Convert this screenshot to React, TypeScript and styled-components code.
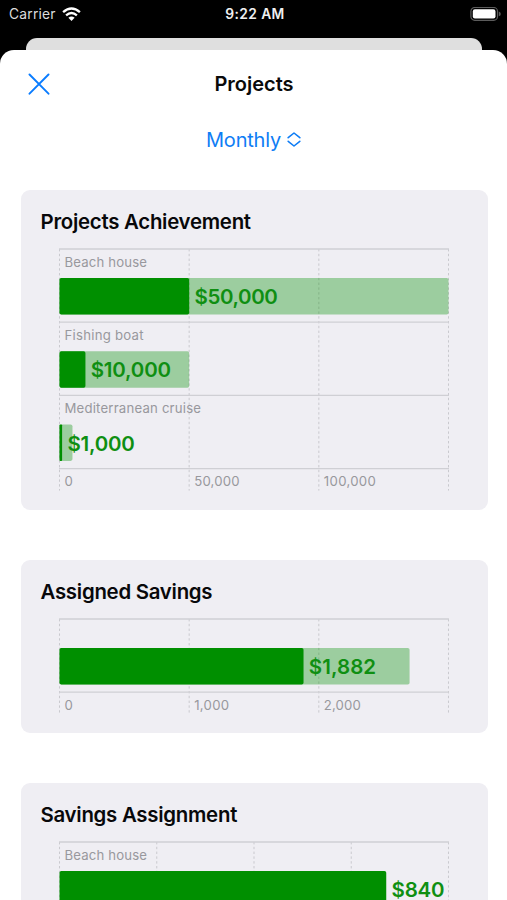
import React from "react";
import styled, { createGlobalStyle } from "styled-components";

const GlobalStyle = createGlobalStyle`
  * { box-sizing: border-box; }
  html, body { margin: 0; background: #000; }
  body { font-family: Inter, "Liberation Sans", sans-serif; overflow: hidden; }
`;

const Screen = styled.div`
  display: flex;
  flex-direction: column;
  width: 507px;
  height: 900px;
  background: #000;
  overflow: hidden;
`;

const StatusBar = styled.header`
  flex: none;
  display: grid;
  grid-template-columns: 1fr auto 1fr;
  align-items: center;
  height: 38px;
  padding: 0 6px 10px 9px;
  color: #f0f0f0;
  font-size: 13.8px;
  line-height: 20px;
`;

const Carrier = styled.div`
  display: flex;
  align-items: center;
  gap: 6px;
  color: #dcdcdc;
  letter-spacing: 0.22px;
`;

const Clock = styled.div`
  font-weight: 600;
  letter-spacing: 0.4px;
`;

const Battery = styled.div`
  display: flex;
  justify-content: flex-end;
`;

const BackSheet = styled.div`
  flex: none;
  height: 12px;
  margin: 0 25px 0 25.5px;
  border-radius: 11px 11px 0 0;
  background: #dfdfdf;
`;

const Sheet = styled.main`
  flex: 1;
  min-height: 0;
  border-radius: 14px 14px 0 0;
  background: #fff;
  overflow: hidden;
`;

const NavBar = styled.div`
  display: grid;
  grid-template-columns: 80px 1fr 80px;
  align-items: center;
  height: 68px;
`;

const CloseButton = styled.button`
  display: flex;
  width: 22px;
  height: 22px;
  margin-left: 28px;
  padding: 0;
  border: 0;
  background: none;
`;

const NavTitle = styled.h1`
  margin: 0;
  padding-left: 1px;
  font-size: 20px;
  font-weight: 600;
  letter-spacing: 0;
  text-align: center;
  color: #0a0a0a;
`;

const PeriodButton = styled.button`
  display: flex;
  align-items: center;
  justify-content: center;
  gap: 6px;
  width: 100%;
  height: 44px;
  padding: 0;
  border: 0;
  background: none;
  color: #0f7df5;
  font: 400 20px Inter, sans-serif;
  letter-spacing: -0.2px;
`;

const Cards = styled.div`
  display: flex;
  flex-direction: column;
  gap: 49.9px;
  padding: 28px 19.5px 0 20.5px;
`;

const Card = styled.section`
  padding-bottom: 18.4px;
  border-radius: 9px;
  background: #efeef3;
`;

const CardTitle = styled.h2`
  margin: 0;
  padding: 18px 0 0 20px;
  height: 58px;
  font-size: 20.4px;
  line-height: 28px;
  font-weight: 600;
  letter-spacing: -0.26px;
  color: #08080a;
  white-space: nowrap;
`;

const Plot = styled.svg`
  display: block;
  margin-left: 37.5px;
`;

const Caption = styled.text`
  font-size: 13.2px;
  fill: #98989d;
`;

const Amount = styled.text`
  font-size: 20.5px;
  font-weight: 600;
  fill: #0f8f12;
`;

const ROW = 73.2;
const WIDTH = 389;

type Row = { name?: string; value: number; goal?: number; label: string; labelWidth: number; nameWidth?: number };
type Tick = { text: string; width: number };
type ChartData = { title: string; max: number; divisions: number; ticks: Tick[]; rows: Row[] };

const charts: ChartData[] = [
  {
    title: "Projects Achievement",
    max: 150000,
    divisions: 3,
    ticks: [{ text: "0", width: 8.5 }, { text: "50,000", width: 45.5 }, { text: "100,000", width: 52 }],
    rows: [
      { name: "Beach house", nameWidth: 82.5, value: 50000, goal: 150000, label: "$50,000", labelWidth: 83.3 },
      { name: "Fishing boat", nameWidth: 79, value: 10000, goal: 50000, label: "$10,000", labelWidth: 80.3 },
      { name: "Mediterranean cruise", nameWidth: 136.5, value: 1000, goal: 5000, label: "$1,000", labelWidth: 67.3 },
    ],
  },
  {
    title: "Assigned Savings",
    max: 3000,
    divisions: 3,
    ticks: [{ text: "0", width: 8.5 }, { text: "1,000", width: 35 }, { text: "2,000", width: 37 }],
    rows: [{ value: 1882, goal: 2700, label: "$1,882", labelWidth: 67.3 }],
  },
  {
    title: "Savings Assignment",
    max: 1000,
    divisions: 4,
    ticks: [],
    rows: [{ name: "Beach house", nameWidth: 82.5, value: 840, label: "$840", labelWidth: 53 }],
  },
];

function BarChart({ data }: { data: ChartData }) {
  const bottom = 1 + data.rows.length * ROW;
  const step = WIDTH / data.divisions;
  const scale = WIDTH / data.max;
  return (
    <Plot width={400} height={bottom + 23} viewBox={`-0.5 0 400 ${bottom + 23}`}>
      {Array.from({ length: data.divisions + 1 }, (_, i) => (
        <line key={i} x1={1 + i * step} x2={1 + i * step} y1={1} y2={bottom + 22} stroke="#c9c9ce" strokeDasharray="2.4 2.4" />
      ))}
      {Array.from({ length: data.rows.length + 1 }, (_, i) => (
        <line key={i} x1={0.5} x2={WIDTH + 1.5} y1={1 + i * ROW} y2={1 + i * ROW} stroke="#cfcfd4" strokeWidth={1.3} />
      ))}
      {data.rows.map((row, i) => {
        const top = 1 + i * ROW;
        const length = row.value * scale;
        return (
          <g key={i}>
            {row.name && (
              <Caption x={6} y={top + 18} textLength={row.nameWidth}>{row.name}</Caption>
            )}
            {row.goal && (
              <rect x={1} y={top + 29} width={row.goal * scale} height={36.5} rx={1.8} fill="#008f00" fillOpacity={0.345} />
            )}
            <rect x={1} y={top + 29} width={length} height={36.5} rx={Math.min(1.8, length / 3)} fill="#008f00" />
            <Amount x={length + 6.3} y={top + 55.2} textLength={row.labelWidth}>{row.label}</Amount>
          </g>
        );
      })}
      {data.ticks.map((tick, i) => (
        <Caption key={i} x={6 + i * step} y={bottom + 17.8} textLength={tick.width}>{tick.text}</Caption>
      ))}
    </Plot>
  );
}

export default function App() {
  return (
    <Screen>
      <GlobalStyle />
      <StatusBar>
        <Carrier>
          Carrier
          <svg width="19" height="15" viewBox="0 0 19 15" fill="none" stroke="#fff" strokeWidth="2.4">
            <path d="M1.1 5.2Q9.5 -2 17.9 5.2" />
            <path d="M4.1 8.3Q9.5 3.8 14.9 8.3" />
            <path d="M6.4 10.8Q9.5 8.2 12.6 10.8L9.5 13.9Z" fill="#fff" stroke="none" />
          </svg>
        </Carrier>
        <Clock>9:22 AM</Clock>
        <Battery>
          <svg width="31" height="15" viewBox="0 0 31 15">
            <rect x="0.9" y="0.5" width="26.6" height="12.8" rx="3.8" fill="none" stroke="#5c5c5c" strokeWidth="1.2" />
            <rect x="2.8" y="2.3" width="22.7" height="9.2" rx="2.1" fill="#fff" />
            <path d="M28.8 4.6Q30.8 5.2 30.8 6.9T28.8 9.2Z" fill="#5c5c5c" />
          </svg>
        </Battery>
      </StatusBar>
      <BackSheet />
      <Sheet>
        <NavBar>
          <CloseButton aria-label="Close">
            <svg width="22" height="22" viewBox="0 0 22 22" stroke="#0a7cff" strokeWidth="1.9" strokeLinecap="round">
              <path d="M1.5 1.5L20.5 20.7M20.5 1.5L1.5 20.7" />
            </svg>
          </CloseButton>
          <NavTitle>Projects</NavTitle>
        </NavBar>
        <PeriodButton>
          Monthly
          <svg width="14" height="16" viewBox="0 0 14 16" fill="none" stroke="currentColor" strokeWidth="1.6" strokeLinecap="round" strokeLinejoin="round">
            <path d="M1.2 5.7L7 1L12.8 5.7M1.2 9.3L7 14L12.8 9.3" />
          </svg>
        </PeriodButton>
        <Cards>
          {charts.map((data) => (
            <Card key={data.title}>
              <CardTitle>{data.title}</CardTitle>
              <BarChart data={data} />
            </Card>
          ))}
        </Cards>
      </Sheet>
    </Screen>
  );
}
